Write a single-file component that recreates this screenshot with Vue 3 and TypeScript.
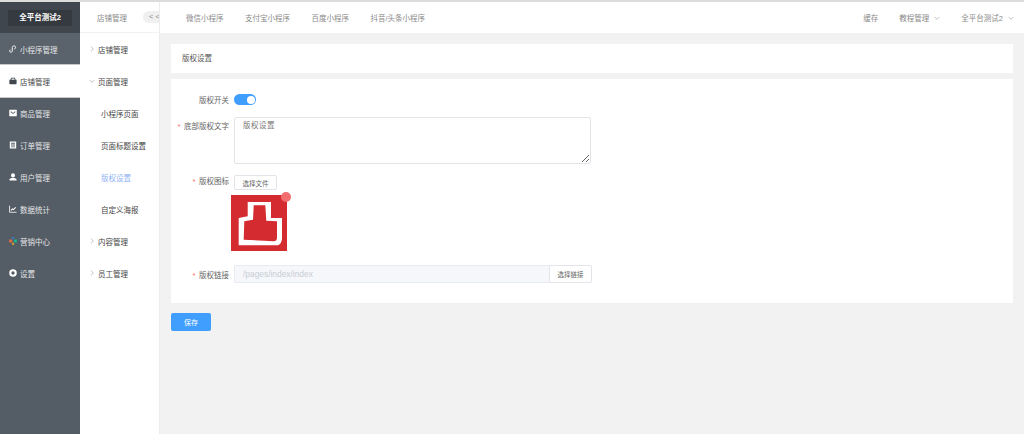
<script setup lang="ts">
import { ref } from 'vue'

const sideMenu = [
  { name: '小程序管理', icon: 'link' },
  { name: '店铺管理', icon: 'shop', active: true },
  { name: '商品管理', icon: 'goods' },
  { name: '订单管理', icon: 'order' },
  { name: '用户管理', icon: 'user' },
  { name: '数据统计', icon: 'chart' },
  { name: '营销中心', icon: 'market' },
  { name: '设置', icon: 'gear' },
]

const subMenu = [
  { name: '店铺管理', arrow: 'right' },
  { name: '页面管理', arrow: 'down' },
  { name: '小程序页面' },
  { name: '页面标题设置' },
  { name: '版权设置', current: true },
  { name: '自定义海报' },
  { name: '内容管理', arrow: 'right' },
  { name: '员工管理', arrow: 'right' },
]

const tabs = ['微信小程序', '支付宝小程序', '百度小程序', '抖音/头条小程序']

const enabled = ref(true)
const copyright = ref('版权设置')
</script>

<template>
  <div class="page">
    <aside class="side">
      <div class="brand"><span class="brand-name">全平台测试2</span></div>
      <div
        v-for="item in sideMenu"
        :key="item.name"
        class="side-item"
        :class="{ active: item.active, first: item.icon === 'link' }"
      >
        <svg class="side-icon" viewBox="0 0 10 10">
          <g v-if="item.icon === 'link'" fill="none" stroke="currentColor" stroke-width="1.2">
            <path d="M1.500 8.800c1.300.7 2.600-.1 2.600-1.500V3.200c0-1.400 1.100-2.300 2.400-2.100 1.400.2 2.200 1.700 1.400 3-.3.5-.8.8-1.300.9" />
            <path d="M1.400 5.800c-.8.9-.6 2.300.1 3" />
          </g>
          <path
            v-else-if="item.icon === 'shop'"
            fill="currentColor"
            fill-rule="evenodd"
            d="M2.600 1h4.800l.8 2.400H9.500v4.800c0 .5-.4.8-.8.8H1.300c-.4 0-.8-.3-.8-.8V3.400h1.300zM3.400 2l-.4 1.400h4L6.600 2z"
          />
          <path
            v-else-if="item.icon === 'goods'"
            fill="currentColor"
            fill-rule="evenodd"
            d="M.8 .8h8.400c.3 0 .5.2.5.5v7.400c0 .3-.2.5-.5.5H.8c-.3 0-.5-.2-.5-.5V1.300c0-.3.2-.5.500-.5zM2.500 2.800 5 5l2.500-2.200.7.8L5 6.400 1.800 3.600z"
          />
          <path
            v-else-if="item.icon === 'order'"
            fill="currentColor"
            fill-rule="evenodd"
            d="M1 .5h8v9H1zM2.500 2.200v1.100h5V2.200zM2.500 4.500v1.100h5V4.500zM2.500 6.800v1.100h5V6.800z"
          />
          <path
            v-else-if="item.icon === 'user'"
            fill="currentColor"
            d="M5 .4a2.500 2.500 0 0 1 2.500 2.600A2.500 2.500 0 0 1 5 5.600 2.500 2.500 0 0 1 2.500 3 2.500 2.500 0 0 1 5 .4zM.6 7.600C1.200 6.500 3 6.100 5 6.100s3.800.4 4.400 1.500v1.800H.6z"
          />
          <g v-else-if="item.icon === 'chart'" fill="none" stroke="currentColor" stroke-width="1">
            <path d="M.7 .8v8.300h8.800" />
            <path stroke-width="1.300" d="M2.400 6.800l1.900-2 1.200 1L8.400 3" />
          </g>
          <g v-else-if="item.icon === 'market'">
            <path fill="#3a7fd5" d="M3.300 .4h3.400L5 4.200z" />
            <path fill="#e56f3c" d="M.2 3.200h2.900L4.300 5 3.100 6.800H.2z" />
            <path fill="#17b890" d="M9.800 3.200H6.900L5.700 5l1.200 1.800h2.900z" />
            <path fill="#f2a531" d="M3.300 9.600h3.400L5 5.800z" />
          </g>
          <path
            v-else
            fill="currentColor"
            fill-rule="evenodd"
            d="M5 .3a4.700 4.700 0 1 1 0 9.400A4.700 4.700 0 0 1 5 .3zM5 2.900a2.100 2.100 0 1 0 0 4.200 2.100 2.100 0 0 0 0-4.200z"
          />
        </svg>
        <span>{{ item.name }}</span>
      </div>
    </aside>

    <nav class="sub">
      <div class="sub-head">
        <span class="sub-title">店铺管理</span>
        <span class="collapse">&lt;&lt;</span>
      </div>
      <div
        v-for="item in subMenu"
        :key="item.name"
        class="sub-item"
        :class="{ current: item.current, leaf: !item.arrow }"
      >
        <svg v-if="item.arrow" class="sub-arrow" viewBox="0 0 8 8">
          <path v-if="item.arrow === 'right'" d="M2.500 .8 5.800 4 2.500 7.200" />
          <path v-else d="M.8 2.500 4 5.800l3.200-3.300" />
        </svg>
        <span>{{ item.name }}</span>
      </div>
    </nav>

    <div class="main">
      <header class="top">
        <div class="tabs">
          <span v-for="tab in tabs" :key="tab">{{ tab }}</span>
        </div>
        <div class="top-right">
          <span>缓存</span>
          <span class="drop">教程管理
            <svg viewBox="0 0 8 8"><path d="M.8 2.500 4 5.800l3.200-3.300" /></svg>
          </span>
          <span class="drop">全平台测试2
            <svg viewBox="0 0 8 8"><path d="M.8 2.500 4 5.800l3.200-3.300" /></svg>
          </span>
        </div>
      </header>

      <section class="content">
        <div class="card title-card">版权设置</div>

        <div class="card form-card">
          <div class="row switch-row">
            <label class="label">版权开关</label>
            <button class="switch" :class="{ on: enabled }" @click="enabled = !enabled"><i /></button>
          </div>

          <div class="row text-row">
            <label class="label"><em>*</em>底部版权文字</label>
            <textarea v-model="copyright" class="area" />
          </div>

          <div class="row icon-row">
            <label class="label"><em>*</em>版权图标</label>
            <div class="icon-col">
              <button class="btn">选择文件</button>
              <div class="thumb">
                <svg viewBox="0 0 56 56" width="56" height="56">
                  <rect width="56" height="56" fill="#d42b30" />
                  <path
                    fill="#fff"
                    d="M16.700 7H40v16h11v20c0 4-2 7.300-5 7.300H7.700V23l9-1.700z"
                  />
                  <path
                    fill="#d42b30"
                    d="M22.700 10.300h11.600l1 15.400 10.700.6V43c0 2-1.300 3.300-3.300 3.300l-30-1.600.6-18.400 8.700-1.600z"
                  />
                </svg>
                <span class="remove" />
              </div>
            </div>
          </div>

          <div class="row link-row">
            <label class="label"><em>*</em>版权链接</label>
            <div class="link-group">
              <input class="link-input" value="/pages/index/index" disabled>
              <button class="btn link-btn">选择链接</button>
            </div>
          </div>
        </div>

        <button class="save">保存</button>
      </section>
    </div>
  </div>
</template>

<style scoped>
.page {
  display: flex;
  height: 434px;
  overflow: hidden;
  border-top: 2px solid #dcdcdc;
  box-sizing: border-box;
  background: #f2f2f2;
  font-family: "Liberation Sans", "Noto Sans CJK SC", sans-serif;
  font-size: 7.500px;
  color: #555;
}

.side {
  width: 80px;
  flex: none;
  background: #545c65;
  color: #e4e6e8;
}
.brand {
  display: flex;
  justify-content: center;
  align-items: center;
  height: 31px;
  background: #40464d;
}
.brand-name {
  width: 64px;
  height: 16px;
  line-height: 16px;
  text-align: center;
  border-radius: 2px;
  background: #353a40;
  color: #fff;
  font-weight: 700;
}
.side-item {
  display: flex;
  align-items: center;
  gap: 3px;
  height: 32px;
  padding-left: 9px;
}
.side-item.first {
  background: #5a626b;
}
.side-item.active {
  background: #fff;
  color: #444;
  box-shadow: 0 1px 0 #c8c8c8, 0 -1px 0 #c8c8c8;
}
.side-icon {
  width: 8px;
  height: 8px;
  flex: none;
  color: #fff;
}
.side-item.active .side-icon {
  color: #3f464d;
}

.sub {
  width: 80px;
  flex: none;
  box-sizing: border-box;
  background: #fff;
  border-right: 1px solid #ececec;
}
.sub-head {
  display: flex;
  align-items: center;
  justify-content: space-between;
  height: 31px;
  border-bottom: 1px solid #f2f2f2;
  box-sizing: border-box;
  padding-left: 17px;
  color: #8a8a8a;
}
.collapse {
  width: 10px;
  height: 12px;
  line-height: 12px;
  padding-left: 6px;
  border-radius: 6px 0 0 6px;
  background: #f0f0f0;
  color: #888;
  letter-spacing: 2px;
  overflow: hidden;
  white-space: nowrap;
}
.sub-item {
  display: flex;
  align-items: center;
  height: 32px;
  padding-left: 9px;
  gap: 3px;
  color: #444;
}
.sub-item.leaf {
  padding-left: 21px;
}
.sub-item.current {
  color: #8fb2f5;
}
.sub-arrow {
  width: 6px;
  height: 6px;
  flex: none;
}
.sub-arrow path,
.drop svg path {
  fill: none;
  stroke: #999;
  stroke-width: 0.8;
}

.main {
  flex: 1;
  min-width: 0;
}
.top {
  display: flex;
  justify-content: space-between;
  align-items: center;
  height: 31px;
  padding: 0 10px 0 26px;
  background: #fff;
  color: #8a8a8a;
}
.tabs {
  display: flex;
  gap: 21.500px;
}
.top-right {
  display: flex;
  align-items: center;
  gap: 21px;
}
.drop {
  display: inline-flex;
  align-items: center;
  gap: 5px;
}
.drop svg {
  width: 6px;
  height: 6px;
}

.content {
  padding: 11px 11px 0;
}
.card {
  background: #fff;
}
.title-card {
  height: 29px;
  line-height: 29px;
  padding-left: 11px;
  color: #555;
}
.form-card {
  margin-top: 6px;
  padding: 10px 0 21px;
  height: 224px;
  box-sizing: border-box;
}
.row {
  display: flex;
}
.label {
  width: 58px;
  flex: none;
  text-align: right;
  margin-right: 5px;
  color: #666;
}
.label em {
  font-style: normal;
  color: #f56c6c;
  margin-right: 3.500px;
}
.switch-row {
  align-items: center;
  height: 21px;
}
.switch {
  position: relative;
  width: 22px;
  height: 11px;
  padding: 0;
  border: 0;
  border-radius: 6px;
  background: #c0c4cc;
}
.switch.on {
  background: #409eff;
}
.switch i {
  position: absolute;
  top: 1.500px;
  left: 1.500px;
  width: 8px;
  height: 8px;
  border-radius: 50%;
  background: #fff;
}
.switch.on i {
  left: 12.500px;
}
.text-row {
  margin-top: 7px;
}
.text-row .label {
  padding-top: 3px;
}
.area {
  width: 357px;
  height: 47px;
  box-sizing: border-box;
  padding: 2px 8px;
  border: 1px solid #e2e4ea;
  border-radius: 2px;
  font: inherit;
  color: #777;
  letter-spacing: 0.500px;
  line-height: 12px;
  outline: none;
}
.icon-row {
  margin-top: 11px;
}
.icon-row .label {
  line-height: 14px;
}
.icon-col {
  display: flex;
  flex-direction: column;
  align-items: flex-start;
}
.btn {
  width: 43px;
  height: 15px;
  padding: 0;
  border: 1px solid #e2e4ea;
  border-radius: 2px;
  background: #fff;
  font: inherit;
  font-size: 6.500px;
  color: #666;
}
.thumb {
  position: relative;
  width: 56px;
  height: 56px;
  margin: 5px 0 0 -3px;
}
.thumb svg {
  display: block;
}
.remove {
  position: absolute;
  top: -3px;
  right: -4px;
  width: 10px;
  height: 10px;
  border-radius: 50%;
  background: #f26d6d;
}
.link-row {
  align-items: center;
  margin-top: 14px;
}
.link-group {
  display: flex;
}
.link-input {
  width: 315px;
  height: 18px;
  box-sizing: border-box;
  padding: 0 8px;
  border: 1px solid #e8ebf1;
  border-right: 0;
  border-radius: 2px 0 0 2px;
  background: #f5f7fa;
  font: inherit;
  font-size: 8.400px;
  color: #c8ccd4;
}
.link-btn {
  width: 43px;
  height: 18px;
  padding: 0;
  border-radius: 0 2px 2px 0;
}
.save {
  display: block;
  width: 40px;
  height: 18px;
  margin-top: 10px;
  padding: 0;
  border: 0;
  border-radius: 2px;
  background: #409eff;
  color: #fff;
  font: inherit;
  font-size: 7px;
}
</style>
